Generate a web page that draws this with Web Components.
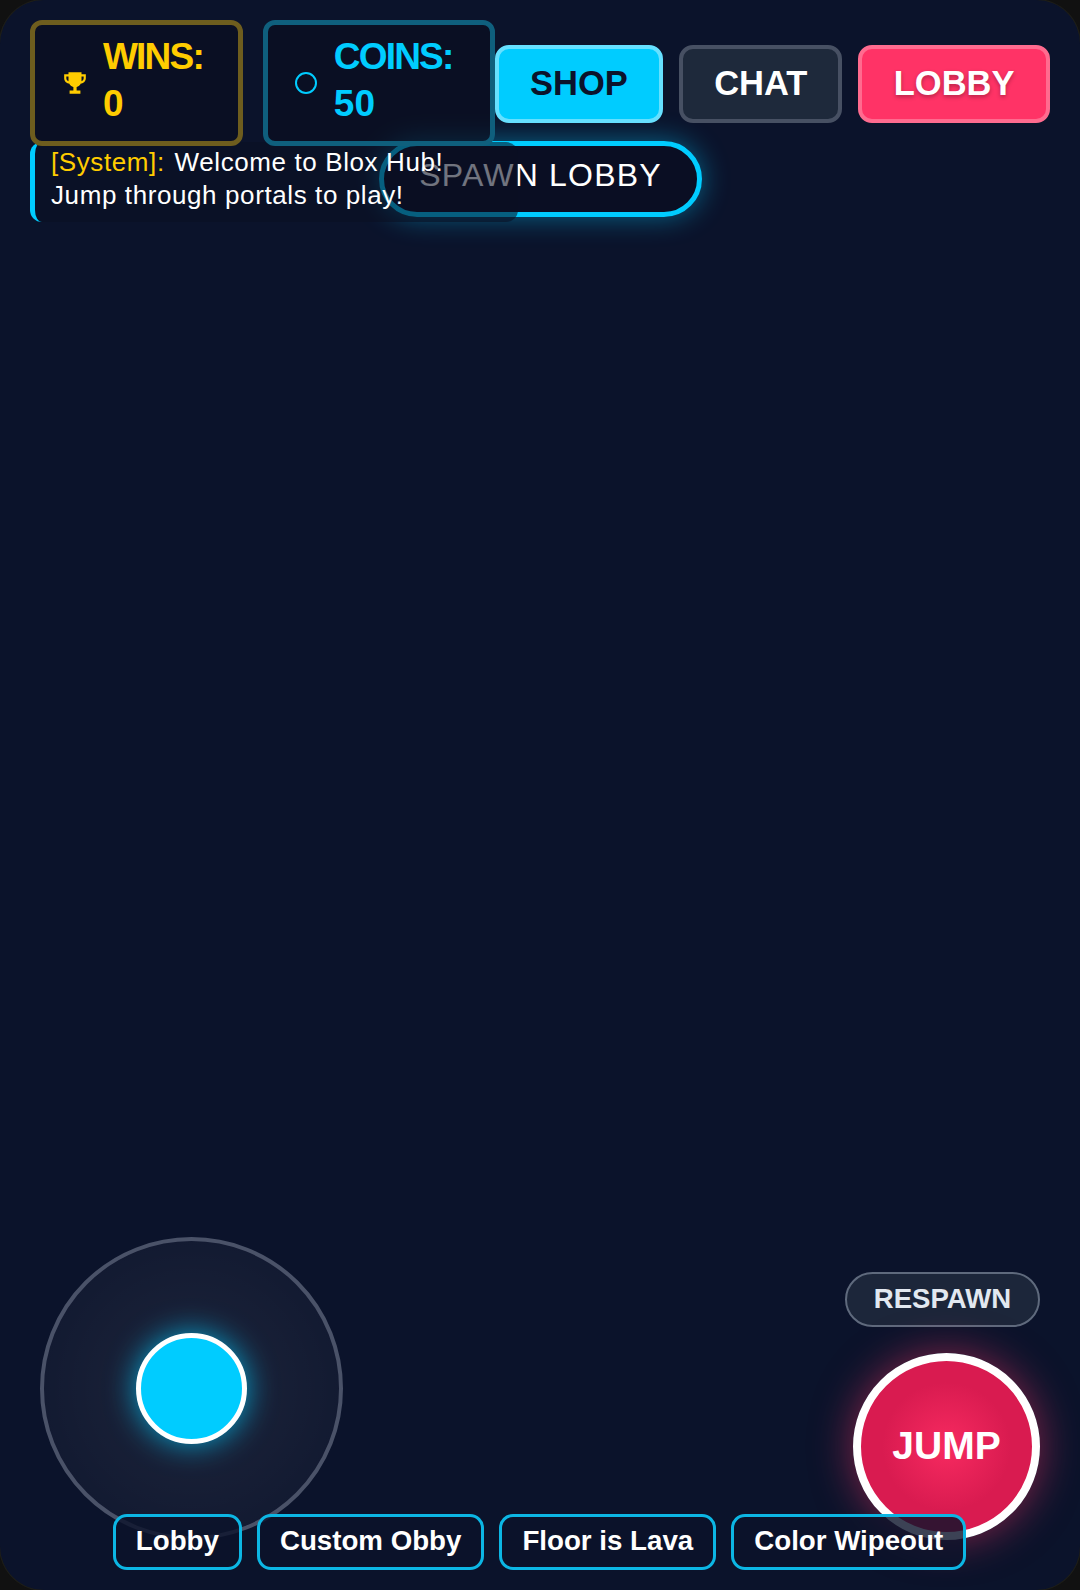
<!DOCTYPE html>
<html>
<head>
<meta charset="utf-8">
<style>
    html, body { margin: 0; padding: 0; background: #111; }
    body { width: 1080px; height: 1590px; overflow: hidden; font-family: "Liberation Sans", Arial, sans-serif; }
</style>
</head>
<body>
<game-screen>
    <top-hud slot="hud">
        <stat-box tone="gold" label="WINS:" value="0">
            <svg slot="icon" width="26" height="26" viewBox="0 0 24 24" fill="#ffcc00"><path d="M6 2h12v2h4v3.5c0 2.600-2 4.700-4.600 5-.8 1.700-2.200 2.900-3.900 3.300V19h3.500v3h-10v-3h3.500v-3.200c-1.700-.4-3.100-1.600-3.900-3.300C4 12.200 2 10.100 2 7.500V4h4V2zm0 4H4v1.500c0 1.200.8 2.300 2 2.800V6zm12 0v4.300c1.200-.5 2-1.600 2-2.800V6h-2z"/></svg>
        </stat-box>
        <stat-box tone="blue" label="COINS:" value="50">
            <svg slot="icon" width="24" height="24" viewBox="0 0 24 24" fill="none" stroke="#00ccff" stroke-width="2"><circle cx="12" cy="12" r="10"/></svg>
        </stat-box>
        <hud-button kind="shop">SHOP</hud-button>
        <hud-button kind="chat">CHAT</hud-button>
        <hud-button kind="lobby">LOBBY</hud-button>
    </top-hud>
    <zone-pill slot="overlay">SPAWN LOBBY</zone-pill>
    <chat-log slot="overlay"><span class="sys">[System]:</span> Welcome to Blox Hub!<br>Jump through portals to play!</chat-log>
    <move-stick slot="overlay"></move-stick>
    <round-action slot="overlay" kind="respawn">RESPAWN</round-action>
    <round-action slot="overlay" kind="jump">JUMP</round-action>
    <portal-bar slot="overlay">
        <portal-chip>Lobby</portal-chip>
        <portal-chip>Custom Obby</portal-chip>
        <portal-chip>Floor is Lava</portal-chip>
        <portal-chip>Color Wipeout</portal-chip>
    </portal-bar>
</game-screen>

<script>
class GameScreen extends HTMLElement {
    constructor() {
        super();
        this.attachShadow({mode: 'open'});
        this.shadowRoot.innerHTML = `
        <style>
            :host {
                display: block;
                position: relative;
                width: 1080px;
                height: 1590px;
                background: #0b132b;
                border-radius: 44px;
                box-shadow: 0 0 0 1px #1e1e18;
                overflow: hidden;
            }
        </style>
        <slot name="hud"></slot>
        <slot name="overlay"></slot>
        `;
    }
}

class TopHud extends HTMLElement {
    constructor() {
        super();
        this.attachShadow({mode: 'open'});
        this.shadowRoot.innerHTML = `
        <style>
            :host {
                display: flex;
                align-items: center;
                padding: 20px 30px 0 30px;
                position: relative;
                z-index: 3;
            }
        </style>
        <slot></slot>
        `;
    }
}

class StatBox extends HTMLElement {
    constructor() {
        super();
        this.attachShadow({mode: 'open'});
        this.shadowRoot.innerHTML = `
        <style>
            :host {
                display: flex;
                align-items: center;
                box-sizing: border-box;
                height: 126px;
                border: 5px solid;
                border-radius: 12px;
                background: rgba(10,14,30,.65);
                font-size: 37px;
                font-weight: 700;
                line-height: 47px;
                margin-right: 20px;
            }
            :host([tone="gold"]) { width: 213px; gap: 15px; padding: 10px 20px 10px 27px; color: #ffcc00; border-color: #6e5d1e; }
            :host([tone="blue"]) { width: 232px; gap: 16px; padding: 10px 20px 10px 26px; color: #00ccff; border-color: #0f5f7d; margin-right: 0; }
            ::slotted(svg) { flex: none; display: block; }
            .text { padding-bottom: 7px; }
            .label { letter-spacing: -1.8px; }
        </style>
        <slot name="icon"></slot>
        <div class="text"><span class="label">${this.getAttribute('label')}</span><br>${this.getAttribute('value')}</div>
        `;
    }
}

class HudButton extends HTMLElement {
    constructor() {
        super();
        this.attachShadow({mode: 'open'});
        this.shadowRoot.innerHTML = `
        <style>
            :host {
                display: flex;
                align-items: center;
                justify-content: center;
                box-sizing: border-box;
                height: 78px;
                margin-top: 2px;
                padding-bottom: 1px;
                border: 4px solid;
                border-radius: 14px;
                font-size: 34.5px;
                font-weight: 700;
                margin-right: 16px;
            }
            :host([kind="shop"]) { width: 169px; background: #00ccff; border-color: #66e0ff; color: #0b132b; }
            :host([kind="chat"]) { width: 163px; background: #1e293b; border-color: #475063; color: #fff; }
            :host([kind="lobby"]) { width: 192px; background: #ff3366; border-color: #ff6b8f; color: #fff; margin-right: 0;
                text-shadow: 0 2px 4px rgba(0,0,0,.3); }
        </style>
        <slot></slot>
        `;
    }
}

class ZonePill extends HTMLElement {
    constructor() {
        super();
        this.attachShadow({mode: 'open'});
        this.shadowRoot.innerHTML = `
        <style>
            :host {
                position: absolute;
                left: 379px;
                top: 141px;
                z-index: 1;
                box-sizing: border-box;
                width: 323px;
                height: 76px;
                border: 5px solid #00ccff;
                border-radius: 40px;
                background: rgba(10,14,34,.8);
                box-shadow: 0 0 28px rgba(0,204,255,.45);
                color: #fff;
                font-size: 32px;
                letter-spacing: 1.2px;
                line-height: 58px;
                text-align: center;
            }
        </style>
        <slot></slot>
        `;
    }
}

class ChatLog extends HTMLElement {
    constructor() {
        super();
        this.attachShadow({mode: 'open'});
        this.shadowRoot.innerHTML = `
        <style>
            :host {
                position: absolute;
                left: 30px;
                top: 142px;
                z-index: 2;
                box-sizing: border-box;
                width: 488px;
                height: 80px;
                padding: 4px 16px;
                border-left: 5px solid #00ccff;
                border-radius: 12px;
                background: rgba(11,16,34,.58);
                color: #fff;
                font-size: 26px;
                letter-spacing: .6px;
                line-height: 33px;
            }
            ::slotted(.sys) { color: #ffcc00; margin-right: 2px; }
        </style>
        <slot></slot>
        `;
    }
}

class MoveStick extends HTMLElement {
    constructor() {
        super();
        this.attachShadow({mode: 'open'});
        this.shadowRoot.innerHTML = `
        <style>
            :host {
                position: absolute;
                left: 40px;
                top: 1237px;
                box-sizing: border-box;
                width: 303px;
                height: 303px;
                display: flex;
                align-items: center;
                justify-content: center;
                border: 4px solid #4a5268;
                border-radius: 50%;
                background: radial-gradient(circle closest-side, rgba(255,255,255,.08), rgba(255,255,255,.03));
            }
            #knob {
                box-sizing: border-box;
                width: 111px;
                height: 111px;
                border: 5px solid #fff;
                border-radius: 50%;
                background: #00ccff;
                box-shadow: 0 0 30px rgba(0,204,255,.75);
            }
        </style>
        <div id="knob"></div>
        `;
    }
}

class RoundAction extends HTMLElement {
    constructor() {
        super();
        this.attachShadow({mode: 'open'});
        this.shadowRoot.innerHTML = `
        <style>
            :host {
                position: absolute;
                box-sizing: border-box;
                display: flex;
                align-items: center;
                justify-content: center;
                font-weight: 700;
                border-radius: 50%;
            }
            :host([kind="respawn"]) {
                left: 845px;
                top: 1272px;
                width: 195px;
                height: 55px;
                padding-bottom: 2px;
                border: 2px solid #5f6a7d;
                border-radius: 28px;
                background: #1c263a;
                color: #e2e8f0;
                font-size: 27.6px;
            }
            :host([kind="jump"]) {
                left: 853px;
                top: 1353px;
                width: 187px;
                height: 187px;
                padding-bottom: 2px;
                border: 8px solid #fff;
                background: radial-gradient(circle closest-side, #f72a60 0%, #d91b50 75%);
                box-shadow: 0 0 40px rgba(255,51,102,.5);
                color: #fff;
                font-size: 39px;
            }
        </style>
        <slot></slot>
        `;
    }
}

class PortalBar extends HTMLElement {
    constructor() {
        super();
        this.attachShadow({mode: 'open'});
        this.shadowRoot.innerHTML = `
        <style>
            :host {
                position: absolute;
                left: 0;
                right: 0;
                top: 1514px;
                display: flex;
                justify-content: center;
                gap: 15px;
                padding-right: 1px;
                z-index: 2;
            }
        </style>
        <slot></slot>
        `;
    }
}

class PortalChip extends HTMLElement {
    constructor() {
        super();
        this.attachShadow({mode: 'open'});
        this.shadowRoot.innerHTML = `
        <style>
            :host {
                display: block;
                box-sizing: border-box;
                height: 56px;
                padding: 0 20px;
                border: 3px solid #0cb6e4;
                border-radius: 14px;
                background: rgba(11,19,43,.8);
                color: #fff;
                font-size: 27.7px;
                font-weight: 700;
                line-height: 48px;
            }
        </style>
        <slot></slot>
        `;
    }
}

customElements.define('game-screen', GameScreen);
customElements.define('top-hud', TopHud);
customElements.define('stat-box', StatBox);
customElements.define('hud-button', HudButton);
customElements.define('zone-pill', ZonePill);
customElements.define('chat-log', ChatLog);
customElements.define('move-stick', MoveStick);
customElements.define('round-action', RoundAction);
customElements.define('portal-bar', PortalBar);
customElements.define('portal-chip', PortalChip);
</script>
</body>
</html>
